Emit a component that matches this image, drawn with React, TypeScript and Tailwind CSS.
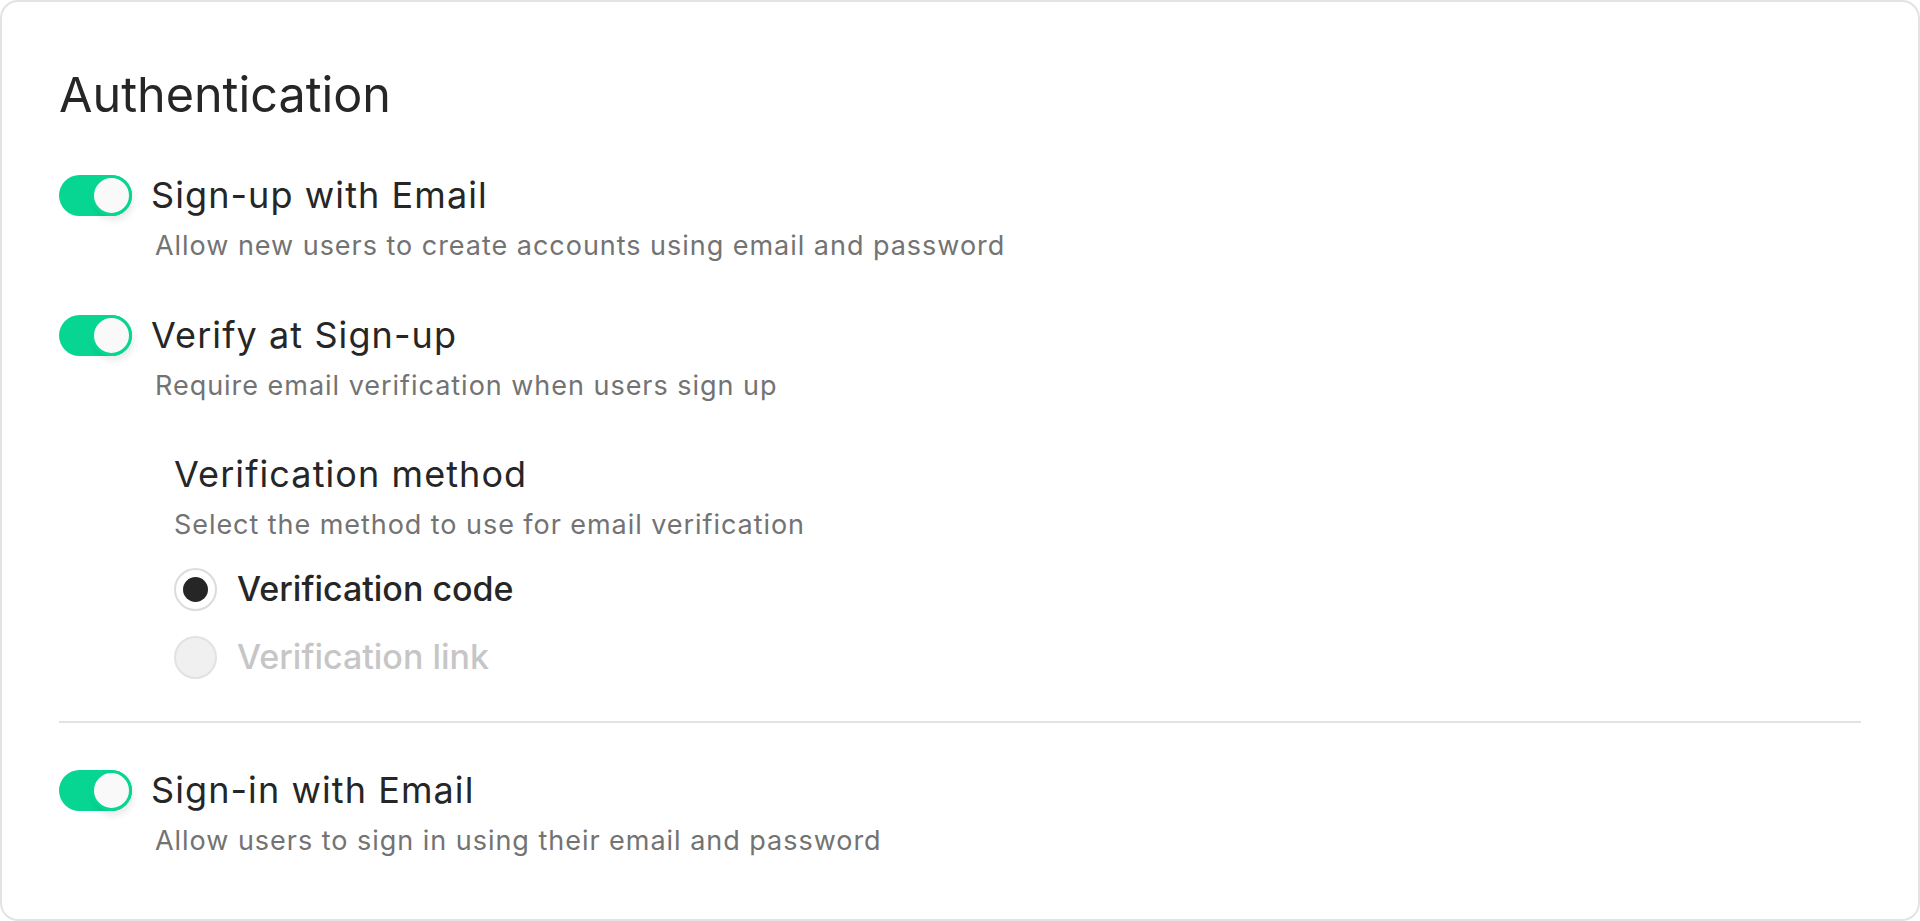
import { useState } from "react";

const font = { fontFamily: "Inter, 'Noto Sans', sans-serif" };

function Toggle({ on, onClick }: { on: boolean; onClick: () => void }) {
  return (
    <button
      type="button"
      onClick={onClick}
      aria-pressed={on}
      className={`relative flex h-[41px] w-[73px] shrink-0 items-center rounded-full ${
        on ? "justify-end bg-[#07d693]" : "justify-start bg-[#e5e5e5]"
      }`}
    >
      <span
        className={`block h-[41px] w-[41px] rounded-full border-[3px] bg-[#f9f9f9] shadow-[2px_5px_6px_rgba(0,0,0,0.08)] ${
          on ? "border-[#07d693]" : "border-[#e5e5e5]"
        }`}
      />
    </button>
  );
}

function Setting({
  label,
  desc,
  on,
  onClick,
}: {
  label: string;
  desc: string;
  on: boolean;
  onClick: () => void;
}) {
  return (
    <div>
      <div className="flex h-[44px] items-center gap-[19px]">
        <Toggle on={on} onClick={onClick} />
        <span className="text-[36px] leading-[44px] tracking-[0.03em] text-[#262626]">{label}</span>
      </div>
      <p className="mt-[11px] ml-[96px] text-[27px] leading-[36px] tracking-[0.036em] text-[#737373]">{desc}</p>
    </div>
  );
}

function Radio({
  label,
  checked,
  disabled,
  onClick,
}: {
  label: string;
  checked: boolean;
  disabled?: boolean;
  onClick?: () => void;
}) {
  return (
    <button
      type="button"
      disabled={disabled}
      onClick={onClick}
      className="flex h-[44px] items-center gap-[20px] text-left"
    >
      <span
        className={`flex h-[43px] w-[43px] items-center justify-center rounded-full border-2 ${
          disabled ? "border-[#e2e2e2] bg-[#f0f0f0]" : "border-[#dcdcdc] bg-white"
        }`}
      >
        {checked && <span className="block h-[25px] w-[25px] rounded-full bg-[#262626]" />}
      </span>
      <span
        className={`text-[34px] leading-[44px] font-medium ${
          disabled ? "text-[#c6c6c6]" : "text-[#262626]"
        }`}
      >
        {label}
      </span>
    </button>
  );
}

export default function App() {
  const [signUp, setSignUp] = useState(true);
  const [verify, setVerify] = useState(true);
  const [signIn, setSignIn] = useState(true);
  const [method, setMethod] = useState("code");

  return (
    <div style={font} className="h-[921px] w-full bg-white">
      <div className="h-full rounded-[18px] border-2 border-[#e3e3e3] px-[57px] pt-[63px]">
        <h1 className="text-[48.5px] leading-[60px] font-normal text-[#262626]">Authentication</h1>

        <div className="mt-[48px]">
          <Setting
            label="Sign-up with Email"
            desc="Allow new users to create accounts using email and password"
            on={signUp}
            onClick={() => setSignUp(!signUp)}
          />
        </div>

        <div className="mt-[49px]">
          <Setting
            label="Verify at Sign-up"
            desc="Require email verification when users sign up"
            on={verify}
            onClick={() => setVerify(!verify)}
          />
        </div>

        <div className="mt-[48px] ml-[115px]">
          <h2 className="text-[36px] leading-[44px] tracking-[0.03em] text-[#262626]">Verification method</h2>
          <p className="mt-[11px] text-[27px] leading-[36px] tracking-[0.035em] text-[#737373]">
            Select the method to use for email verification
          </p>
          <div className="mt-[24px] flex flex-col gap-[24px]">
            <Radio label="Verification code" checked={method === "code"} onClick={() => setMethod("code")} />
            <Radio label="Verification link" checked={false} disabled />
          </div>
        </div>

        <div className="mt-[42px] h-[2px] bg-[#e3e3e3]" />

        <div className="mt-[45px]">
          <Setting
            label="Sign-in with Email"
            desc="Allow users to sign in using their email and password"
            on={signIn}
            onClick={() => setSignIn(!signIn)}
          />
        </div>
      </div>
    </div>
  );
}
